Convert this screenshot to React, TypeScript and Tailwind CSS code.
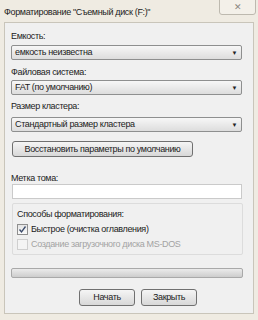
const font = { fontFamily: '"Liberation Sans", "DejaVu Sans", sans-serif', letterSpacing: "-0.35px" };

const Select = ({ value, className }: { value: string; className: string }) => (
  <div className={`${className} h-[15px] w-[231px] rounded-[2px] border border-[#8e8f8f] bg-gradient-to-b from-[#f7f7f7] to-[#dddddd] flex items-center justify-between pl-[3px] pr-[4px]`}>
    <span className="leading-none text-[#222]">{value}</span>
    <span className="text-[6px] leading-none text-[#222]">▼</span>
  </div>
);

const Check = ({ checked, disabled }: { checked?: boolean; disabled?: boolean }) => (
  <span
    className={`w-[11px] h-[11px] border flex items-center justify-center ${
      disabled ? "border-[#cfcfcf] bg-[#f4f4f4]" : "border-[#8f8f8f] bg-gradient-to-b from-[#e4e4e4] to-[#fafafa]"
    }`}
  >
    {checked && (
      <svg width="9" height="9" viewBox="0 0 9 9">
        <path d="M1.5 4.5 L3.5 7 L7.5 1.5" stroke="#3a4a6a" strokeWidth="1.3" fill="none" />
      </svg>
    )}
  </span>
);

const Button = ({ children, className }: { children: React.ReactNode; className: string }) => (
  <div className={`${className} rounded-[3px] border border-[#707070] bg-gradient-to-b from-[#f5f5f5] to-[#d8d8d8] flex items-center justify-center leading-none text-[#222] whitespace-nowrap`}>
    {children}
  </div>
);

export default function App() {
  return (
    <div style={font} className="w-[258px] h-[320px] bg-[#efebe2] flex flex-col px-[4px] pb-[6px] overflow-hidden text-[9px]">
      {/* Title bar */}
      <div className="h-[22px] flex items-start relative">
        <span className="mt-[8px] text-[#1c1c1c] whitespace-nowrap leading-none">Форматирование "Съемный диск (F:)"</span>
        <div className="absolute right-[-2px] top-[-1px] w-[37px] h-[16px] rounded-b-[3px] border border-[#bdb9af] bg-[#f3f0e9] flex items-center justify-center">
          <span className="text-[9px] leading-none text-[#8a8680]">✕</span>
        </div>
      </div>

      {/* Client area */}
      <div className="flex-1 border border-[#c9c5ba] bg-[#f0f0f0] pl-[6px] pt-[7px] text-[#222]">
        <div className="h-[12px] leading-[12px]">Емкость:</div>
        <Select className="mt-[3px]" value="емкость неизвестна" />

        <div className="mt-[6px] h-[12px] leading-[12px]">Файловая система:</div>
        <Select className="mt-[2px]" value="FAT (по умолчанию)" />

        <div className="mt-[5px] h-[12px] leading-[12px]">Размер кластера:</div>
        <Select className="mt-[5px]" value="Стандартный размер кластера" />

        <Button className="mt-[9px] ml-[1px] w-[181px] h-[16px]">Восстановить параметры по умолчанию</Button>

        <div className="mt-[15px] h-[12px] leading-[12px]">Метка тома:</div>
        <div className="ml-[1px] h-[15px] w-[230px] border border-[#cacaca] bg-white" />

        <div className="mt-[4px] ml-[1px] w-[231px] h-[52px] border border-[#dcdcdc] rounded-[2px] pl-[4px] pt-[4px]">
          <div className="h-[12px] leading-[12px]">Способы форматирования:</div>
          <div className="mt-[3px] h-[12px] flex items-center gap-[3px]">
            <Check checked />
            <span className="leading-none">Быстрое (очистка оглавления)</span>
          </div>
          <div className="mt-[3px] h-[12px] flex items-center gap-[3px] text-[#a3a3a3]">
            <Check disabled />
            <span className="leading-none">Создание загрузочного диска MS-DOS</span>
          </div>
        </div>

        <div className="mt-[13px] h-[10px] w-[232px] rounded-[2px] border border-[#a9a9a9] bg-gradient-to-b from-[#ebebeb] to-[#cdcdcd]" />

        <div className="mt-[11px] flex gap-[6px] pl-[68px]">
          <Button className="w-[56px] h-[17px]">Начать</Button>
          <Button className="w-[56px] h-[17px]">Закрыть</Button>
        </div>
      </div>
    </div>
  );
}
